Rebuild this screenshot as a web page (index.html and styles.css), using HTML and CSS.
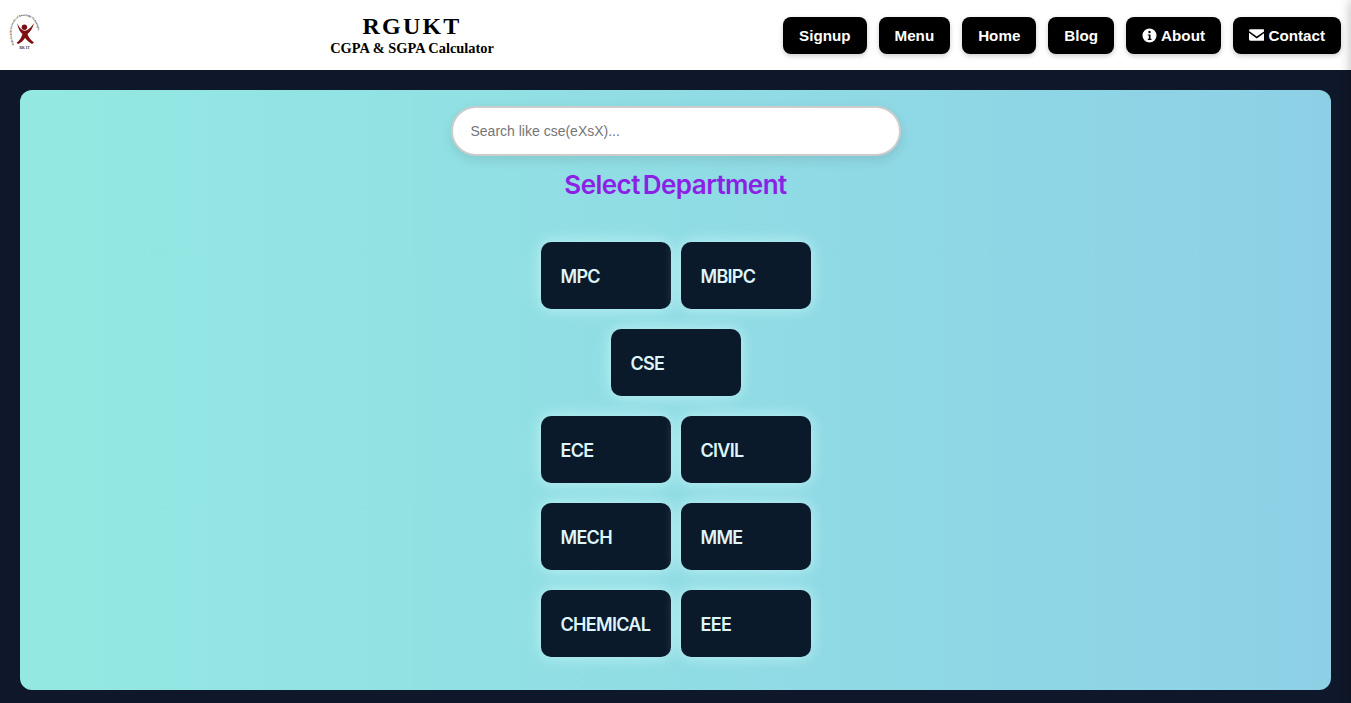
FILE: index.html
```html
<!DOCTYPE html>
<html lang="en">
<head>
<meta charset="utf-8">
<title>RGUKT CGPA &amp; SGPA Calculator</title>
<link rel="stylesheet" href="styles.css">
</head>
<body>
<header class="site-header">
  <svg class="logo" viewBox="0 0 30 36" aria-label="RGUKT logo">
    <defs><path id="arc" d="M4 32 C-2 18 3 2.8 14.5 2.8 C26 2.8 31 18 27 31"></path></defs>
    <text class="logo-arc"><textPath href="#arc">Rajiv Gandhi University of Knowledge Technologies</textPath></text>
    <circle cx="14.4" cy="14.2" r="2.7" fill="#7d0f10"></circle>
    <path d="M7 10 C8 15 10 19 12.5 21 C11.5 24.5 9.5 27.5 6.5 30 L8.5 31 C11 29.5 13.5 27.5 15 25 C17 27.5 19.5 29.5 22 31 L24 29.5 C21 27.5 18.5 24.5 17.5 21 C20 19 23 15 24 10 C21.5 14 18 17.5 14.8 17.8 C11.5 17.5 9 14 7 10Z" fill="#7d0f10"></path>
    <text class="logo-foot" x="14.5" y="35.5" text-anchor="middle">RK IT</text>
  </svg>
  <div class="brand">
    <div class="brand-title">RGUKT</div>
    <div class="brand-sub">CGPA &amp; SGPA Calculator</div>
  </div>
  <nav class="nav">
    <a class="nav-btn" href="#">Signup</a>
    <a class="nav-btn" href="#">Menu</a>
    <a class="nav-btn" href="#">Home</a>
    <a class="nav-btn" href="#">Blog</a>
    <a class="nav-btn" href="#"><svg class="nav-icon" viewBox="0 0 16 16"><path fill-rule="evenodd" d="M8 .5a7.5 7.5 0 1 0 0 15 7.5 7.5 0 0 0 0-15ZM8 3a1.3 1.3 0 1 1 0 2.6A1.3 1.3 0 0 1 8 3ZM6.2 6.8h2.9v4.6h1v1.3H6.2v-1.3h1.1V8.1H6.2Z"></path></svg> About</a>
    <a class="nav-btn" href="#"><svg class="nav-icon nav-icon-wide" viewBox="0 0 16 12"><path d="M1.5 0h13A1.5 1.5 0 0 1 16 1.5v.4L8 7.6 0 1.9v-.4A1.5 1.5 0 0 1 1.5 0Z"></path><path d="M0 3.8v6.7A1.5 1.5 0 0 0 1.5 12h13a1.5 1.5 0 0 0 1.5-1.5V3.8L8 9.5Z"></path></svg> Contact</a>
  </nav>
</header>
<div class="edge-shadow"></div>
<main class="panel">
  <input class="search" type="text" placeholder="Search like cse(eXsX)...">
  <h1 class="heading">Select Department</h1>
  <div class="dept-rows">
    <div class="dept-row"><a class="dept" href="#">MPC</a><a class="dept" href="#">MBIPC</a></div>
    <div class="dept-row"><a class="dept" href="#">CSE</a></div>
    <div class="dept-row"><a class="dept" href="#">ECE</a><a class="dept" href="#">CIVIL</a></div>
    <div class="dept-row"><a class="dept" href="#">MECH</a><a class="dept" href="#">MME</a></div>
    <div class="dept-row"><a class="dept" href="#">CHEMICAL</a><a class="dept" href="#">EEE</a></div>
  </div>
</main>
</body>
</html>
```
FILE: styles.css
```css
* { box-sizing: border-box; }
html, body { margin: 0; height: 100%; overflow: hidden; }
body {
  background: #0f172a;
  font-family: "Liberation Sans", Arial, sans-serif;
  display: flex;
  flex-direction: column;
}
.site-header {
  height: 70px;
  flex: none;
  background: #fff;
  display: flex;
  align-items: center;
  justify-content: space-between;
  padding: 0 10px;
}
.edge-shadow {
  position: fixed;
  top: 0;
  bottom: 0;
  right: -10px;
  width: 10px;
  box-shadow: 0 0 12px rgba(0, 0, 0, 0.3);
}
.logo { width: 30px; height: 36px; margin-top: -8px; overflow: visible; }
.logo-arc { font-family: "Liberation Serif", serif; font-size: 2.6px; font-weight: bold; fill: #222; }
.logo-foot { font-family: "Liberation Serif", serif; font-size: 3.6px; font-weight: bold; fill: #333; }
.brand { text-align: center; font-family: "Liberation Serif", serif; font-weight: bold; color: #000; margin-left: 1px; }
.brand-title { font-size: 24px; line-height: 27px; letter-spacing: 2.2px; }
.brand-sub { font-size: 14.4px; line-height: 17px; }
.nav { display: flex; gap: 12px; }
.nav-btn {
  display: flex;
  align-items: center;
  gap: 4px;
  height: 37px;
  padding: 0 16px;
  background: #000;
  color: #fff;
  font-size: 15.2px;
  font-weight: bold;
  text-decoration: none;
  border-radius: 8px;
  box-shadow: 0 2px 5px rgba(0, 0, 0, 0.2);
}
.nav-icon { width: 15px; height: 15px; fill: #fff; }
.nav-icon-wide { width: 15.5px; height: 12px; }
.panel {
  margin: 20px 20px 13px;
  flex: 1;
  padding-top: 16px;
  border-radius: 12px;
  background: linear-gradient(to right, #93e9e2, #8dd0e6);
  display: flex;
  flex-direction: column;
  align-items: center;
}
.search {
  width: 450px;
  height: 50px;
  padding: 0 18px;
  border: 2px solid #ccc;
  border-radius: 25px;
  background: #fff;
  font-family: "Liberation Sans", Arial, sans-serif;
  font-size: 14px;
  box-shadow: 0 4px 12px rgba(0, 0, 0, 0.1);
  outline: none;
}
.search::placeholder { color: #757575; }
.heading {
  margin: 12px 0 0;
  font-family: "Inter", "Lato", sans-serif;
  font-size: 26px;
  line-height: 34px;
  font-weight: 600;
  letter-spacing: -0.55px;
  word-spacing: -3px;
  color: #8c21e6;
}
.dept-rows { display: flex; flex-direction: column; gap: 20px; margin-top: 40px; }
.dept-row { display: flex; justify-content: center; gap: 10px; }
.dept {
  width: 130px;
  height: 67px;
  padding: 1px 0 0 20px;
  display: flex;
  align-items: center;
  border-radius: 10px;
  background: #0b1a2a;
  color: #def5f9;
  font-family: "Inter", "Lato", sans-serif;
  font-size: 18px;
  font-weight: 600;
  letter-spacing: -0.7px;
  text-decoration: none;
  box-shadow: 0 0 15px rgba(200, 245, 250, 0.9);
}
```
